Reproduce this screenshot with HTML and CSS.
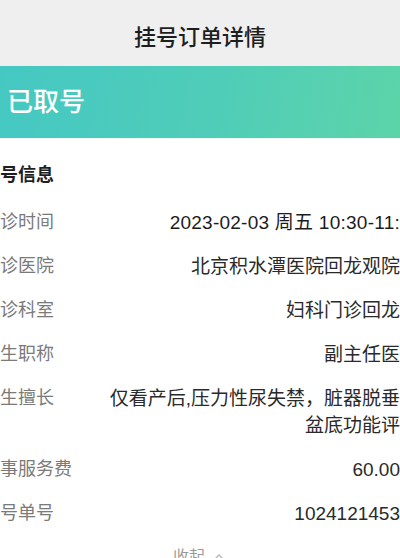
FILE: index.html
```html
<!DOCTYPE html>
<html lang="zh-CN">
<head>
<meta charset="utf-8">
<title>挂号订单详情</title>
<link rel="stylesheet" href="styles.css">
</head>
<body>
<div class="page">
  <header class="header"><h1 class="title">挂号订单详情</h1></header>
  <div class="banner"><span class="status">已取号</span></div>
  <section class="detail">
    <h2 class="heading">挂号信息</h2>
    <div class="row"><span class="label">就诊时间</span><span class="value strong">2023-02-03 周五 10:30-11:</span></div>
    <div class="row"><span class="label">就诊医院</span><span class="value">北京积水潭医院回龙观院</span></div>
    <div class="row"><span class="label">就诊科室</span><span class="value">妇科门诊回龙</span></div>
    <div class="row"><span class="label">医生职称</span><span class="value">副主任医</span></div>
    <div class="row"><span class="label">医生擅长</span><span class="value">仅看产后,压力性尿失禁，脏器脱垂<br>盆底功能评</span></div>
    <div class="row"><span class="label">医事服务费</span><span class="value">60.00</span></div>
    <div class="row"><span class="label">挂号单号</span><span class="value">1024121453</span></div>
    <div class="toggle"><span>收起</span><svg class="caret" width="12" height="8" viewBox="0 0 12 8"><polyline points="1,7 6,2 11,7" fill="none" stroke="#b5b5b5" stroke-width="1.3"/></svg></div>
  </section>
</div>
</body>
</html>
```
FILE: styles.css
```css
html, body {
  margin: 0;
  padding: 0;
}
body {
  width: 400px;
  height: 558px;
  overflow: hidden;
  background: #ffffff;
  font-family: "Liberation Sans", "Noto Sans CJK SC", sans-serif;
}
.page {
  width: 400px;
  overflow: hidden;
}
.header {
  height: 65px;
  background: #efefef;
  display: flex;
  align-items: center;
  justify-content: center;
  border-bottom: 1px solid #e2f3f1;
}
.title {
  margin: 0;
  font-size: 22px;
  font-weight: 500;
  color: #1e1e1e;
  line-height: 30px;
  padding-top: 10px;
}
.banner {
  height: 72px;
  background: linear-gradient(100deg, #45c8c3 0%, #50cdb8 55%, #5cd4a9 100%);
  display: flex;
  align-items: center;
  padding-left: 7px;
  border-bottom: 1px solid #f0f8f6;
}
.status {
  font-size: 26px;
  color: #ffffff;
  font-weight: 500;
  line-height: 32px;
}
.detail {
  margin-left: -18px;
  width: 418px;
  padding-top: 23px;
}
.heading {
  margin: 0 0 11px 0;
  font-size: 18px;
  font-weight: 700;
  line-height: 27px;
  color: #1f1f1f;
}
.row {
  display: flex;
  align-items: flex-start;
  padding: 8.5px 0;
}
.label {
  flex: none;
  width: 110px;
  font-size: 18px;
  line-height: 27px;
  color: #7a7a7a;
}
.value {
  flex: 1;
  text-align: right;
  font-size: 19px;
  line-height: 27px;
  color: #2a2a2a;
  white-space: nowrap;
}
.value.strong {
  color: #1c1c1c;
  letter-spacing: 0.25px;
}
.toggle {
  display: flex;
  align-items: center;
  justify-content: center;
  gap: 8px;
  padding-top: 11px;
  padding-left: 16px;
  font-size: 16px;
  line-height: 22px;
  color: #9a9a9a;
}
.caret {
  display: block;
}
```
